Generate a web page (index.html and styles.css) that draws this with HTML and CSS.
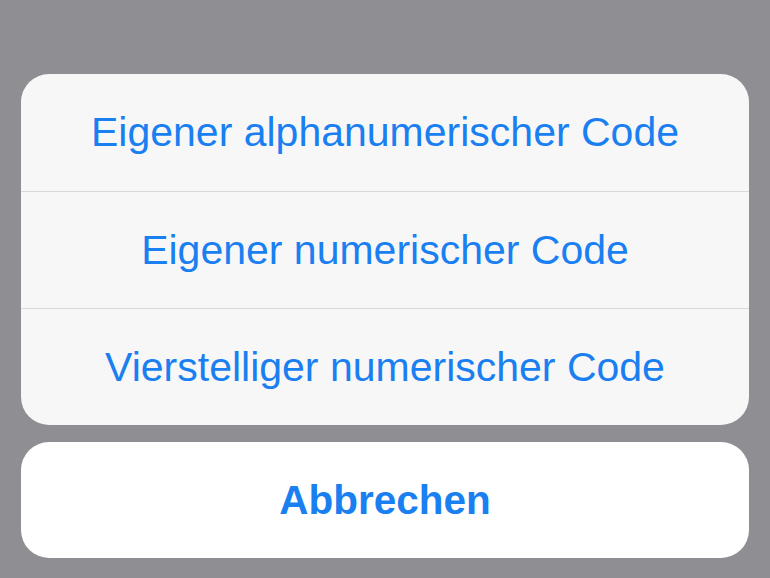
FILE: index.html
```html
<!DOCTYPE html>
<html lang="de">
<head>
<meta charset="utf-8">
<title>Code-Optionen</title>
<link rel="stylesheet" href="styles.css">
</head>
<body>
<div class="sheet">
  <div class="group">
    <div class="option">Eigener alphanumerischer Code</div>
    <div class="option">Eigener numerischer Code</div>
    <div class="option">Vierstelliger numerischer Code</div>
  </div>
  <div class="cancel">Abbrechen</div>
</div>
</body>
</html>
```
FILE: styles.css
```css
html, body {
  margin: 0;
  padding: 0;
}
body {
  background: #8e8e93;
  width: 770px;
  height: 578px;
  overflow: hidden;
  font-family: "Liberation Sans", Arial, sans-serif;
}
.sheet {
  padding: 74px 21px 0 21px;
  display: flex;
  flex-direction: column;
  gap: 17px;
}
.group {
  background: #f7f7f8;
  border-radius: 28px;
  overflow: hidden;
  display: flex;
  flex-direction: column;
}
.option {
  height: 117px;
  display: flex;
  align-items: center;
  justify-content: center;
  color: #1a7ff0;
  font-size: 41px;
  border-top: 1px solid #d9d9dc;
  box-sizing: border-box;
}
.option:first-child {
  border-top: none;
}
.cancel {
  background: #ffffff;
  border-radius: 28px;
  height: 116px;
  display: flex;
  align-items: center;
  justify-content: center;
  color: #1a7ff0;
  font-size: 40.5px;
  font-weight: bold;
}
```
